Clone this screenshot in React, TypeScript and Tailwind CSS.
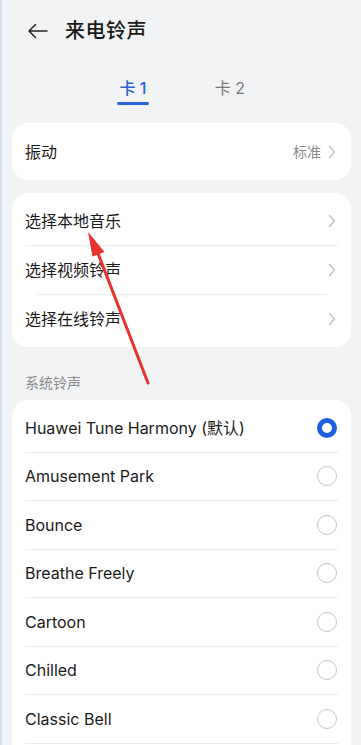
import React from 'react';

const ringtones = [
  'Huawei Tune Harmony (默认)',
  'Amusement Park',
  'Bounce',
  'Breathe Freely',
  'Cartoon',
  'Chilled',
  'Classic Bell',
];

const Chevron: React.FC = () => (
  <svg width="8" height="14" viewBox="0 0 8 14" fill="none" className="shrink-0">
    <path d="M1.5 1.5L6.5 7L1.5 12.5" stroke="#c2c2c2" strokeWidth="1.4" strokeLinecap="round" strokeLinejoin="round" />
  </svg>
);

const Radio: React.FC<{ checked?: boolean }> = ({ checked }) =>
  checked ? (
    <div className="w-5 h-5 rounded-full border-[5.5px] border-[#1e5fe0] bg-white shrink-0" />
  ) : (
    <div className="w-5 h-5 rounded-full border-[1.5px] border-[#c6c6c6] bg-white shrink-0" />
  );

const NavRow: React.FC<{ label: string }> = ({ label }) => (
  <div className="h-12 flex items-center justify-between pl-[13px] pr-[15px]">
    <span className="text-[16px] text-[#1a1a1a]">{label}</span>
    <Chevron />
  </div>
);

export default function App() {
  return (
    <div className="relative w-full h-[745px] overflow-hidden bg-[#f1f3f5] border-l-2 border-[#d3def0] font-['Inter','Noto_Sans_CJK_SC',sans-serif]">
      {/* header */}
      <div className="h-[62px] flex items-center pl-[25px] gap-[17px]">
        <svg width="21" height="16" viewBox="0 0 21 16" fill="none">
          <path d="M20 8H2M8.5 1.5L2 8l6.5 6.5" stroke="#222" strokeWidth="1.5" strokeLinecap="round" strokeLinejoin="round" />
        </svg>
        <h1 className="text-[20px] font-medium text-[#1a1a1a] tracking-[0.5px]">来电铃声</h1>
      </div>

      {/* tabs */}
      <div className="h-[61px] flex justify-center gap-[66px] pt-[14px] pr-[1px]">
        <div className="flex flex-col items-center">
          <span className="h-6 leading-6 text-[16px] font-medium text-[#2a62d8]">卡 1</span>
          <div className="mt-[2px] h-[3px] w-[32px] rounded-full bg-[#2a62d8]" />
        </div>
        <div className="flex flex-col items-center">
          <span className="h-6 leading-6 text-[16px] text-[#7a7a7a]">卡 2</span>
        </div>
      </div>

      {/* vibration */}
      <div className="mx-[10px] bg-white rounded-2xl h-[57px] flex items-center justify-between pl-[13px] pr-[15px]">
        <span className="text-[16px] text-[#1a1a1a]">振动</span>
        <div className="flex items-center gap-[7px]">
          <span className="text-[14px] text-[#8a8a8a]">标准</span>
          <Chevron />
        </div>
      </div>

      {/* sources */}
      <div className="mx-[10px] mt-[13px] bg-white rounded-2xl py-1">
        <NavRow label="选择本地音乐" />
        <div className="mx-[13px] h-px bg-[#ececec]" />
        <NavRow label="选择视频铃声" />
        <div className="mx-[24px] h-px bg-[#ececec]" />
        <NavRow label="选择在线铃声" />
      </div>

      <div className="pt-[26px] pb-[7px] pl-[23px] text-[14px] leading-5 text-[#8a8a8a]">系统铃声</div>

      {/* ringtones */}
      <div className="mx-[10px] bg-white rounded-2xl pt-1 pb-10">
        {ringtones.map((name, i) => (
          <div key={name}>
            {i > 0 && <div className="mx-[13px] h-px bg-[#ececec]" />}
            <div className="h-[47.5px] flex items-center justify-between pl-[13px] pr-[14px]">
              <span className="text-[16px] text-[#1a1a1a]">{name}</span>
              <Radio checked={i === 0} />
            </div>
          </div>
        ))}
        <div className="mx-[13px] h-px bg-[#ececec]" />
      </div>

      {/* annotation arrow */}
      <svg className="absolute inset-0 pointer-events-none" width="361" height="745" viewBox="0 0 361 745">
        <path d="M95.5 252 L146 383" stroke="#e8322b" strokeWidth="3" strokeLinecap="round" />
        <path d="M86 232 L102.5 252 L90.5 256.5 Z" fill="#e8322b" />
      </svg>
    </div>
  );
}
